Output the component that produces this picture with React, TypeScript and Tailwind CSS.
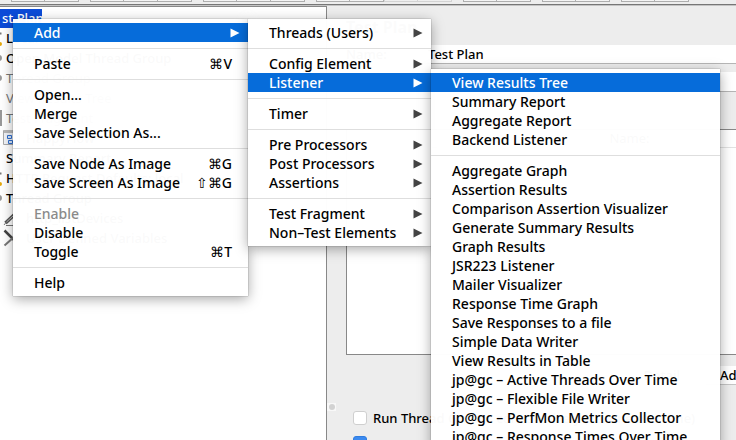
import type { ReactNode } from "react";

type Item = { label: string; keys?: string; sub?: boolean; active?: boolean; disabled?: boolean };

const mainMenu: Item[][] = [
  [{ label: "Add", sub: true, active: true }],
  [{ label: "Paste", keys: "⌘V" }],
  [{ label: "Open..." }, { label: "Merge" }, { label: "Save Selection As..." }],
  [
    { label: "Save Node As Image", keys: "⌘G" },
    { label: "Save Screen As Image", keys: "⇧⌘G" },
  ],
  [{ label: "Enable", disabled: true }, { label: "Disable" }, { label: "Toggle", keys: "⌘T" }],
  [{ label: "Help" }],
];

const addMenu: Item[][] = [
  [{ label: "Threads (Users)", sub: true }],
  [
    { label: "Config Element", sub: true },
    { label: "Listener", sub: true, active: true },
  ],
  [{ label: "Timer", sub: true }],
  [
    { label: "Pre Processors", sub: true },
    { label: "Post Processors", sub: true },
    { label: "Assertions", sub: true },
  ],
  [
    { label: "Test Fragment", sub: true },
    { label: "Non–Test Elements", sub: true },
  ],
];

const listenerMenu: Item[][] = [
  [
    { label: "View Results Tree", active: true },
    { label: "Summary Report" },
    { label: "Aggregate Report" },
    { label: "Backend Listener" },
  ],
  [
    { label: "Aggregate Graph" },
    { label: "Assertion Results" },
    { label: "Comparison Assertion Visualizer" },
    { label: "Generate Summary Results" },
    { label: "Graph Results" },
    { label: "JSR223 Listener" },
    { label: "Mailer Visualizer" },
    { label: "Response Time Graph" },
    { label: "Save Responses to a file" },
    { label: "Simple Data Writer" },
    { label: "View Results in Table" },
    { label: "jp@gc – Active Threads Over Time" },
    { label: "jp@gc – Flexible File Writer" },
    { label: "jp@gc – PerfMon Metrics Collector" },
    { label: "jp@gc – Response Times Over Time" },
  ],
];

function Menu({ groups, place, name }: { groups: Item[][]; place: string; name: string }) {
  return (
    <div
      role="menu"
      aria-label={name}
      className={`absolute bg-white/98 py-1 font-medium shadow-[0_3px_12px_rgba(0,0,0,0.35),0_0_1px_rgba(0,0,0,0.5)] ${place}`}
    >
      {groups.map((group, i) => (
        <div key={i}>
          {i > 0 && (
            <div role="separator" className="flex h-3 items-center">
              <div className="h-px w-full bg-[#dedede]" />
            </div>
          )}
          {group.map((item) => (
            <button
              key={item.label}
              type="button"
              role="menuitem"
              disabled={item.disabled}
              className={`flex h-[19px] w-full items-center pl-[21px] text-left whitespace-nowrap ${
                item.sub ? "pr-2" : "pr-4"
              } ${item.active ? "bg-[#066cda] text-white" : item.disabled ? "text-[#8a8a8a]" : "text-black"}`}
            >
              <span className="flex-1">{item.label}</span>
              {item.keys && <span>{item.keys}</span>}
              {item.sub && (
                <svg width="10" height="10" viewBox="0 0 10 10" className={item.active ? "fill-white" : "fill-[#444]"}>
                  <path d="M0.5 0.5 9.5 5 0.5 9.5Z" />
                </svg>
              )}
            </button>
          ))}
        </div>
      ))}
    </div>
  );
}

function ToolGroup({ count, faded }: { count: number; faded?: boolean }) {
  return (
    <div className={`flex h-0.5 shrink-0 ${faded ? "opacity-40" : ""}`}>
      {Array.from({ length: count }, (_, i) => (
        <div key={i} className="w-[34px] border-r border-b border-[#aeaeae] bg-[#f4f4f4] first:border-l" />
      ))}
    </div>
  );
}

const Dot = () => <circle cx="-1" cy="10" r="3" fill="#999" />;

const Dropper = () => (
  <>
    <path d="M0 5.5H1.5" stroke="#777" strokeWidth="2" />
    <circle cx="0" cy="16" r="2" fill="#e5a90e" />
  </>
);

const tree: { label: string; gray?: boolean; indent?: boolean; icon?: ReactNode }[] = [
  { label: "Local", icon: <Dropper /> },
  { label: "Open Model Thread Group", icon: <Dot /> },
  { label: "Thread Group", gray: true, icon: <Dot /> },
  { label: "View Results Tree", gray: true },
  { label: "Test Fragment", gray: true, icon: <path d="M0 2H2V18H0Z" fill="#999" /> },
  {
    label: "HappyFlow",
    indent: true,
    icon: (
      <>
        <path d="M3.5 2.5H19.5V16.5H3.5Z" fill="#f2f4f8" stroke="#aaa" />
        <path d="M4 2H19V5H4Z" fill="#b9b9b9" />
        <path d="M7.5 7.5H11.5V10.5H7.5ZM8.5 12.5H12.5V15.5H8.5Z" fill="#dbe8fa" stroke="#2f6fd0" />
      </>
    ),
  },
  { label: "Summary Report" },
  { label: "HTTP Request Defaults: local", icon: <Dropper /> },
  { label: "Thread Group", icon: <Dot /> },
  {
    label: "http_listDevices",
    indent: true,
    icon: (
      <>
        <path d="M5.5 15 14 7" stroke="#555" strokeWidth="3.5" />
        <path d="M6.5 14 13 8" stroke="#bbb" />
        <path d="M4 17 6 14.5M6 17.5H14" stroke="#777" />
      </>
    ),
  },
  {
    label: "User Defined Variables",
    indent: true,
    icon: (
      <>
        <path d="M4.5 2.5 14 12" stroke="#444" strokeWidth="2.5" />
        <path d="M4.5 17.5 14 9" stroke="#777" strokeWidth="2" />
        <path d="M14 14 20 5" stroke="#d9b96a" strokeWidth="2" />
      </>
    ),
  },
];

export default function App() {
  return (
    <div className="relative flex h-screen flex-col overflow-hidden bg-[#ededed] font-['Noto_Sans','Lucida_Grande',sans-serif] text-sm text-black">
      <div className="flex h-1 shrink-0 gap-[11px] pl-[11px]">
        <ToolGroup count={2} />
        <ToolGroup count={3} />
        <ToolGroup count={3} />
        <div className="flex shrink-0">
          <ToolGroup count={2} />
          <ToolGroup count={2} faded />
        </div>
        <ToolGroup count={2} />
        <ToolGroup count={2} />
        <ToolGroup count={2} />
      </div>
      <div className="h-0.5 shrink-0 border-t border-[#767676] bg-[#c4c4c4]" />
      <div className="flex min-h-0 flex-1">
        <nav
          aria-label="Test elements"
          className="w-[327px] shrink-0 border-t border-r border-[#888] bg-white pt-0.5 text-[13px] leading-5"
        >
          <div className="h-[19px] w-[42px] bg-[#0c4bd8] pl-0.5 leading-[19px] font-medium whitespace-nowrap text-white">
            st Plan
          </div>
          {tree.map((row, i) => (
            <div
              key={i}
              className={`relative h-5 whitespace-nowrap ${row.indent ? "pl-[26px]" : "pl-1.5"} ${row.gray ? "text-[#777]" : "font-medium"}`}
            >
              {row.icon && (
                <svg width="24" height="20" viewBox="0 0 24 20" fill="none" className="absolute top-0 left-0">
                  {row.icon}
                </svg>
              )}
              {row.label}
            </div>
          ))}
        </nav>
        <div className="flex w-[9px] shrink-0 flex-col pt-[397px]">
          <div className="flex h-2 shrink-0 items-center justify-center bg-[#f8f8f8]">
            <div className="size-1.5 rounded-full bg-[#d2d2d2]" />
          </div>
        </div>
        <main className="min-w-0 flex-1 pl-2.5 text-[13px] font-medium">
          <h1 className="h-[39px] pt-2 text-base leading-[26px] font-bold text-[#444]">Test Plan</h1>
          <div className="flex h-[19px] items-center">
            <label htmlFor="plan-name" className="w-[78px] shrink-0">Name:</label>
            <input
              id="plan-name"
              defaultValue="Test Plan"
              className="h-[19px] min-w-0 flex-1 border-b border-[#b5b5b5] bg-white pl-1 outline-none"
            />
          </div>
          <div className="mt-2 flex h-5 items-center">
            <label htmlFor="plan-comments" className="w-[78px] shrink-0">Comments:</label>
            <input id="plan-comments" className="h-5 min-w-0 flex-1 border-b border-[#b5b5b5] bg-white outline-none" />
          </div>
          <div className="mt-[37px] h-[226px] border border-r-0 border-[#888] bg-white">
            <table className="w-full">
              <thead>
                <tr>
                  <th className="h-[17px] border-b border-[#e2e2e2] pr-0 pl-44 leading-4 font-normal">Name:</th>
                </tr>
              </thead>
            </table>
          </div>
          <div className="mt-[11px] flex h-[19px] justify-end gap-4">
            <button type="button" className="rounded-sm bg-white px-2 text-[#222]">Detail</button>
            <button type="button" className="-mr-12 w-20 rounded-sm border-b border-[#c5c5c5] bg-white pl-4 text-left">
              Add
            </button>
          </div>
          <div className="mt-[23px] flex h-5 items-center gap-1.5 pl-[7px] whitespace-nowrap">
            <input
              id="serial"
              type="checkbox"
              className="size-3.5 shrink-0 appearance-none rounded-[3px] border border-[#cfcfcf] bg-white"
            />
            <label htmlFor="serial">Run Thread Groups consecutively (i.e. one at a time)</label>
          </div>
          <div className="mt-2 flex h-6 items-start gap-1.5 pl-[7px] whitespace-nowrap">
            <input
              id="teardown"
              type="checkbox"
              defaultChecked
              className="size-3.5 shrink-0 appearance-none rounded-[3px] border border-[#2f7cdf] bg-[#3b8af0]"
            />
            <label htmlFor="teardown">Run tearDown Thread Groups</label>
          </div>
        </main>
      </div>
      <Menu name="Test Plan" groups={mainMenu} place="top-[19px] left-[13px] w-[235px]" />
      <Menu name="Add" groups={addMenu} place="top-[19px] left-[248px] w-[183px]" />
      <Menu name="Listener" groups={listenerMenu} place="top-[69px] left-[431px] w-[289px]" />
    </div>
  );
}
